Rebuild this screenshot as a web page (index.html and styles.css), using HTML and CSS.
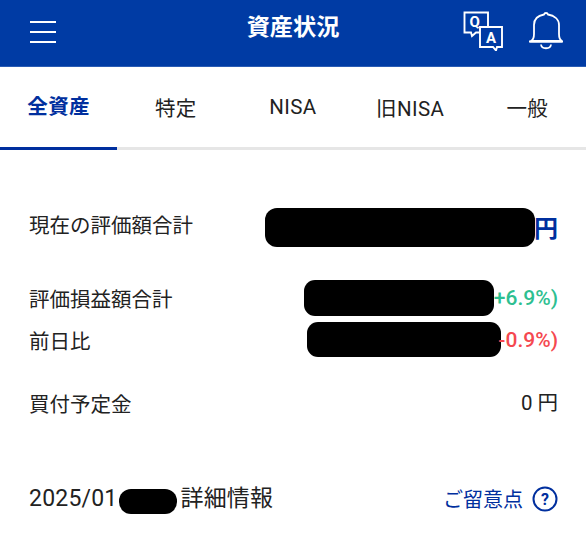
FILE: index.html
```html
<!DOCTYPE html>
<html lang="ja">
<head>
<meta charset="utf-8">
<title>資産状況</title>
<link rel="stylesheet" href="styles.css">
</head>
<body>
<header class="topbar">
  <svg class="icon-menu" width="26" height="24" viewBox="0 0 26 24"><path d="M0 2h26M0 12h26M0 22h26" stroke="#fff" stroke-width="2.200" fill="none"/></svg>
  <h1 class="title">資産状況</h1>
  <div class="actions">
    <svg class="icon-qa" width="40" height="40" viewBox="0 0 40 40" fill="none" stroke="#fff" stroke-width="1.900">
      <path d="M25 15.500V1.500H1.500v20H8l1 3.500 4-3.500h4"/>
      <path d="M17 16h22v20h-5l-1 3.500-3-3.500H17z"/>
      <text class="qa-q" x="6.500" y="16">Q</text>
      <text class="qa-a" x="23" y="32">A</text>
    </svg>
    <svg class="icon-bell" width="34" height="38" viewBox="0 0 34 38" fill="none" stroke="#fff" stroke-width="1.800">
      <path d="M2 29c2-1 3-3 3-7V13C5 7 9 3.500 15 2.500c.5-2 3.500-2 4 0C25 3.500 30 7 30 13v9c0 4 1 6 3 7z"/>
      <path d="M1 29.500h32" stroke-width="2.400" stroke-linecap="round"/>
      <path d="M12 32.500c.5 5 9.500 5 10 0"/>
    </svg>
  </div>
</header>
<nav class="tabs">
  <a class="tab active">全資産</a>
  <a class="tab">特定</a>
  <a class="tab">NISA</a>
  <a class="tab">旧NISA</a>
  <a class="tab">一般</a>
</nav>
<main class="content">
  <div class="row total">
    <span>現在の評価額合計</span>
    <span class="value total-value"><i class="mask mask-total"></i><b class="yen">円</b></span>
  </div>
  <div class="row gain">
    <span>評価損益額合計</span>
    <span class="value"><i class="mask mask-gain"></i><span class="pos">+6.9%)</span></span>
  </div>
  <div class="row day">
    <span>前日比</span>
    <span class="value"><i class="mask mask-day"></i><span class="neg">-0.9%)</span></span>
  </div>
  <div class="row planned">
    <span>買付予定金</span>
    <span class="value">0 円</span>
  </div>
  <div class="row foot">
    <span class="foot-title">2025/01<i class="mask mask-date"></i>詳細情報</span>
    <a class="note">ご留意点
      <svg class="icon-help" width="26" height="26" viewBox="0 0 26 26" fill="none"><circle cx="13" cy="13" r="11.500" stroke="#002f9e" stroke-width="2"/><text class="help-q" x="13" y="18.500">?</text></svg>
    </a>
  </div>
</main>
</body>
</html>
```
FILE: styles.css
```css
* { box-sizing: border-box; }
html, body { margin: 0; padding: 0; }
body {
  width: 586px;
  height: 534px;
  overflow: hidden;
  background: #fff;
  color: #222;
  font-family: "Noto Sans CJK JP", Roboto, sans-serif;
  font-size: 20.500px;
}
.topbar {
  height: 67px;
  background: #003ba4;
  display: flex;
  align-items: center;
  position: relative;
  padding: 0 23px 4px 30px;
  border-bottom: 1px solid #2a5cb4;
}
.title {
  position: absolute;
  left: 0;
  right: 0;
  top: 7px;
  margin: 0;
  text-align: center;
  color: #fff;
  font-size: 23.200px;
  line-height: 36px;
  font-weight: 700;
}
.icon-menu { display: block; margin-top: 2px; }
.actions { margin-left: auto; display: flex; align-items: center; gap: 26px; }
.icon-qa, .icon-bell { display: block; }
.qa-q, .qa-a { fill: #fff; stroke: none; font: 700 15px Roboto, sans-serif; }
.tabs {
  height: 83px;
  display: flex;
  border-bottom: 3px solid #e6e6e6;
}
.tab {
  width: 117.200px;
  height: 83px;
  display: flex;
  align-items: center;
  justify-content: center;
  padding-bottom: 4px;
  font-size: 20.500px;
  letter-spacing: .4px;
  color: #222;
  font-family: Roboto, "Noto Sans CJK JP", sans-serif;
}
.tab.active {
  color: #002f9e;
  font-weight: 700;
  border-bottom: 3px solid #002f9e;
}
.content { padding: 0 28px 0 29px; }
.row {
  display: flex;
  justify-content: space-between;
  align-items: center;
  font-size: 20.500px;
  line-height: 30px;
}
.total { height: 40px; margin-top: 55px; align-items: flex-start; }
.total > span:first-child { font-size: 20.500px; line-height: 38px; }
.gain { height: 36px; margin-top: 35px; }
.day { height: 35px; margin-top: 6px; }
.planned { margin-top: 31px; height: 30px; }
.foot { margin-top: 62px; height: 38px; }
.value { display: flex; align-items: center; font-family: Roboto, "Noto Sans CJK JP", sans-serif; }
.mask { display: inline-block; background: #000; }
.mask-total { width: 270px; height: 39px; border-radius: 12px; margin-right: -1px; }
.mask-gain { width: 190px; height: 36px; border-radius: 11px; }
.mask-day { width: 194px; height: 35px; border-radius: 11px; }
.mask-date { width: 58px; height: 25px; border-radius: 12px; vertical-align: -8px; margin: 0 3px 0 2px; }
.yen { color: #002f9e; font-size: 24px; font-weight: 700; line-height: 40px; margin-top: 4px; }
.pos { color: #2ebf91; font-size: 21px; font-weight: 500; }
.neg { color: #f5484f; font-size: 21px; font-weight: 500; margin-left: -3px; }
.foot-title { font-size: 23px; letter-spacing: .2px; font-family: Roboto, "Noto Sans CJK JP", sans-serif; }
.note {
  display: flex;
  align-items: center;
  gap: 9px;
  color: #002f9e;
  font-size: 20px;
}
.icon-help { display: block; }
.help-q { fill: #002f9e; font: 700 16px Roboto, sans-serif; text-anchor: middle; }
```
